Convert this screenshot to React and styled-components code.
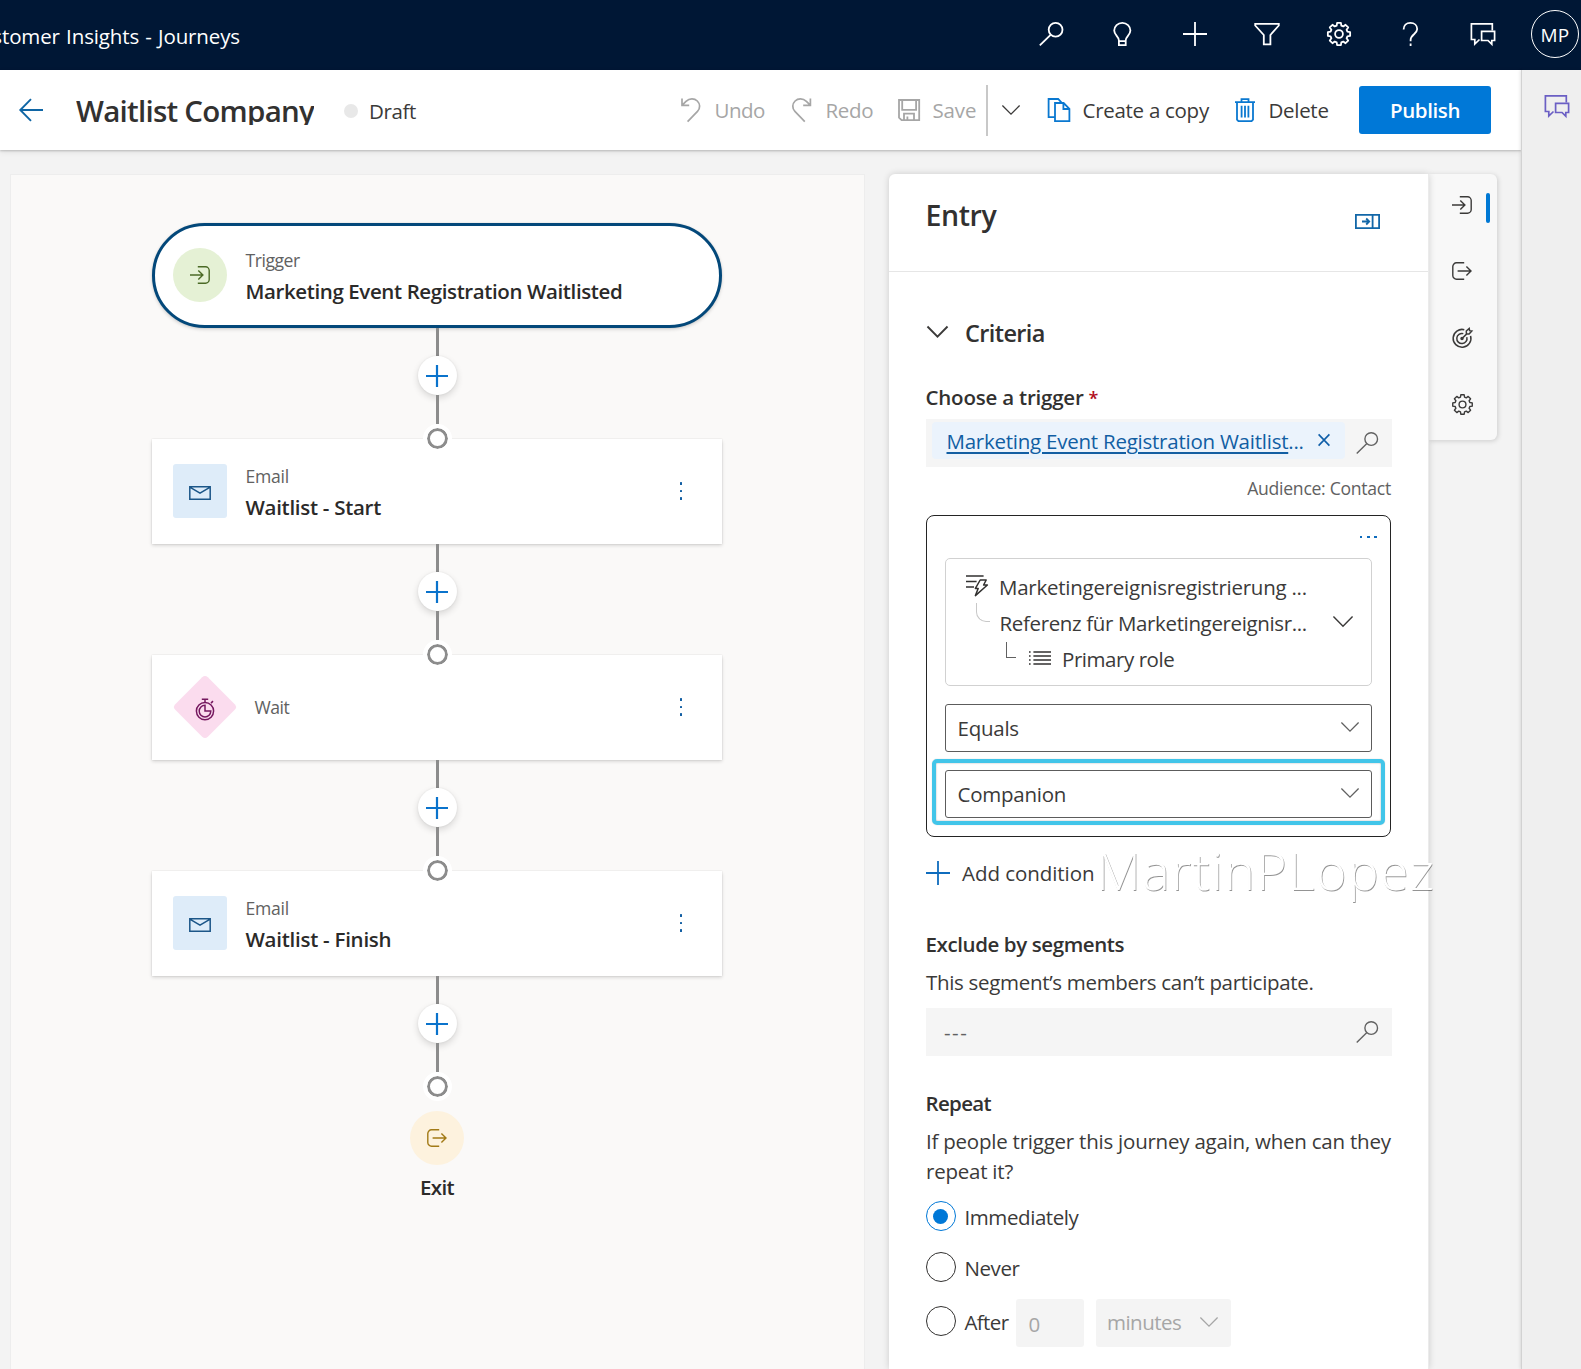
import React from 'react';
import styled, { createGlobalStyle, css } from 'styled-components';

/* ---------- base ---------- */

const GlobalStyle = createGlobalStyle`
  *, *::before, *::after { box-sizing: border-box; }
  html, body { margin: 0; height: 100%; overflow: hidden; }
  body {
    font-family: "Open Sans", "Noto Sans", sans-serif;
    font-size: 20.5px;
    line-height: 28px;
    color: #323130;
    background: #f3f3f3;
  }
  svg { display: block; flex: none; overflow: visible; }
`;

const Text = styled.span`
  display: block;
  flex: none;
  white-space: nowrap;
  letter-spacing: ${(p) => p.$track || 0}px;
  color: ${(p) => p.$color || '#3b3a39'};
  font-weight: ${(p) => (p.$strong ? 600 : 400)};
`;

const SmallText = styled(Text)`
  font-size: 17.6px;
  line-height: 24px;
  color: #616161;
`;

const Spacer = styled.div`
  flex: none;
  height: ${(p) => p.$size}px;
`;

/* ---------- icons ---------- */

const Icon = ({ w = 24, h = 24, vw, vh, stroke = 1.6, color = 'currentColor', children }) => (
  <svg width={w} height={h} viewBox={`0 0 ${vw || w} ${vh || h}`} fill="none" stroke={color} strokeWidth={stroke}>
    {children}
  </svg>
);

const gearPath = (() => {
  const pts = [];
  for (let i = 0; i < 8; i += 1) {
    const a = (i * Math.PI) / 4;
    [[-0.27, 8.7], [-0.17, 11.3], [0.17, 11.3], [0.27, 8.7]].forEach(([d, r]) => {
      pts.push(`${(12 + r * Math.sin(a + d)).toFixed(2)} ${(12 - r * Math.cos(a + d)).toFixed(2)}`);
    });
  }
  return `M${pts.join('L')}Z`;
})();

const SearchIcon = ({ size = 24, stroke = 1.8, color }) => (
  <Icon w={size} h={size} vw={24} vh={24} stroke={stroke} color={color}>
    <circle cx="16.6" cy="7.7" r="6.9" />
    <path d="M11.6 12.8 .8 23.4" />
  </Icon>
);
const BulbIcon = () => (
  <Icon stroke={1.8}>
    <path d="M7.9 18.4C7.9 14.6 3.2 13 3.2 8.6a8.1 7.8 0 0 1 16.2 0c0 4.4-4.7 6-4.7 9.8v4.8H7.9ZM7.9 19.2h6.8" />
  </Icon>
);
const PlusIcon = ({ size = 24, stroke = 1.8, color }) => (
  <Icon w={size} h={size} vw={24} vh={24} stroke={stroke} color={color}>
    <path d="M12 0v24M0 12h24" />
  </Icon>
);
const FunnelIcon = () => (
  <Icon stroke={1.8}>
    <path d="M.2 1.9h23.6v1.6L15.4 13v9.4H8.8V13L.2 3.5Z" />
  </Icon>
);
const GearIcon = ({ size = 24, stroke = 1.8 }) => (
  <Icon w={size} h={size} vw={24} vh={24} stroke={stroke}>
    <path d={gearPath} strokeLinejoin="round" />
    <circle cx="12" cy="12" r="3.9" />
  </Icon>
);
const HelpIcon = () => (
  <Icon stroke={1.8}>
    <path d="M4.6 7.6C4.6 3.4 7.4.9 11.4.9s6.8 2.4 6.8 6.2c0 5-6.6 5.3-6.6 10.9v1.2M11.6 21.6V24" />
  </Icon>
);
const ChatIcon = ({ color }) => (
  <Icon stroke={1.7} color={color}>
    <path d="M21.3 8.6V1.9H.4v15.6h3.4v4.6l4.7-4.6" />
    <path d="M10.6 9.3h13v9.2h-2.8v3.7L17 18.5h-6.4Z" />
  </Icon>
);
const BackIcon = () => (
  <Icon w={24} h={24} stroke={1.9} color="#0f66a5">
    <path d="M24 12H1.6M12 1.2 1.3 12 12 22.8" />
  </Icon>
);
const UndoIcon = () => (
  <Icon stroke={1.7}>
    <path d="M3 .4v6.9h7.2M3.2 7.1 7 3.4c3.6-3.4 8.4-3.2 11.3-.4s3.2 7.3.2 10.4L8.6 23.6" />
  </Icon>
);
const RedoIcon = () => (
  <Icon stroke={1.7}>
    <path d="M20.4.4v6.9h-7.2M20.2 7.1l-3.8-3.7C12.8 0 8 .2 5.1 3s-3.2 7.3-.2 10.4L14.8 23.6" />
  </Icon>
);
const SaveIcon = () => (
  <Icon stroke={1.8}>
    <path d="M2 2h20.2v20.2H4.6L2 19.7ZM5.2 2v9.8h13.9V2M7 22.2v-6.6h10v6.6M10.4 22v-3.4" />
  </Icon>
);
const CopyIcon = () => (
  <Icon stroke={1.8} color="#0a78d0">
    <path d="M8 19.2H1.6V1h9.6l3.6 3.8M8 5h8.6l5.8 5.8v12.3H8ZM16.4 5v6h6" />
  </Icon>
);
const TrashIcon = () => (
  <Icon stroke={1.8} color="#0a78d0">
    <path d="M2 4.2h20M8.5 4V1.2h7V4M4 4.4v17.2l1.4 1.5h13.2l1.4-1.5V4.4M8.6 7.8v11.6M12 7.8v11.6M15.4 7.8v11.6" />
  </Icon>
);
const ChevronIcon = ({ w = 18, color = '#3b3a39', stroke = 1.3 }) => (
  <Icon w={w} h={w * 0.56} vw={18} vh={10} stroke={stroke} color={color}>
    <path d="M.4.4 9 9.1 17.6.4" />
  </Icon>
);
const EnterIcon = ({ color }) => (
  <Icon w={20} h={18} stroke={1.4} color={color}>
    <path d="M7.8.8h7.7a3.7 3.7 0 0 1 3.7 3.7v9a3.7 3.7 0 0 1-3.7 3.7H7.8M0 9h12.6M8.3 4.4 12.9 9l-4.6 4.6" />
  </Icon>
);
const LeaveIcon = ({ color }) => (
  <Icon w={20} h={18} stroke={1.4} color={color}>
    <path d="M12.2.8H4.5A3.7 3.7 0 0 0 .8 4.5v9a3.7 3.7 0 0 0 3.7 3.7h7.7M5.6 9h13.2M14.4 4.4 19 9l-4.6 4.6" />
  </Icon>
);
const TargetIcon = () => (
  <Icon w={20} h={20} stroke={1.5}>
    <path d="M12.3 1.7a8.9 8.9 0 1 0 6.3 6.2M11.3 5.6a5.1 5.1 0 1 0 3.5 3.5M9.8 10.8 15 5.6M14.4 5.9l-.1-2.9L17.2.4l.4 2.3 2.2.4-2.7 2.9Z" />
    <circle cx="10" cy="10.6" r="1" fill="currentColor" />
  </Icon>
);
const MailIcon = () => (
  <Icon w={22} h={14} stroke={1.5} color="#1c5688">
    <path d="M.8.8h20.4v12.4H.8ZM.8 1.2 11 7.2l10.2-6" />
  </Icon>
);
const TimerIcon = () => (
  <Icon w={20} h={22} stroke={1.5} color="#75185f">
    <circle cx="10" cy="12.6" r="8.6" />
    <path d="M10 6.8a5.8 5.8 0 1 0 5.8 5.8H10ZM6.8.8h6.4M10 .8v3.2M16 4.6l2-2" />
  </Icon>
);
const CollapseIcon = () => (
  <Icon w={25} h={15} stroke={1.8} color="#1267a8">
    <path d="M.9.9h23.2v13.2H.9ZM17.6.9v13.2M7 7.5h7M11.2 4.5l3 3-3 3" />
  </Icon>
);
const BoltListIcon = () => (
  <Icon w={22} h={22} stroke={1.5}>
    <path d="M0 1h17.6M0 6.4h10.6M0 12h8" />
    <path d="M14.2 5h6l-2.6 5h3.8L9.4 20.6l2.8-7.2H9.4Z" strokeLinejoin="round" />
  </Icon>
);
const ListIcon = () => (
  <Icon w={22} h={14} stroke={1.3}>
    <path d="M4.4 1H22M4.4 5H22M4.4 9H22M4.4 13H22" />
    <path d="M0 1h1.6M0 5h1.6M0 9h1.6M0 13h1.6" />
  </Icon>
);
const CloseIcon = () => (
  <Icon w={12} h={12} stroke={1.6} color="#0f5ea8">
    <path d="M.6.4 11.4 11.6M11.4.4.6 11.6" />
  </Icon>
);

/* ---------- application header ---------- */

const Page = styled.div`
  display: flex;
  flex-direction: column;
  width: 100%;
  height: 100vh;
  overflow: hidden;
`;

const TopBar = styled.header`
  display: flex;
  flex: none;
  justify-content: space-between;
  height: 70px;
  padding-right: 2px;
  background: #001735;
  color: #fff;
`;

const AppNameClip = styled.div`
  display: flex;
  justify-content: flex-end;
  width: 240px;
  padding-top: 22px;
  overflow: hidden;
`;

const AppName = styled(Text)`
  color: #fff;
  word-spacing: 1px;
`;

const TopActions = styled.nav`
  display: flex;
  align-items: center;
  gap: 48px;
  padding-bottom: 2px;
`;

const Avatar = styled.div`
  display: flex;
  align-items: center;
  justify-content: center;
  width: 48px;
  height: 48px;
  margin-left: -12px;
  padding-top: 2px;
  border: 1.5px solid #fff;
  border-radius: 50%;
  font-size: 19px;
  letter-spacing: 0.3px;
`;

/* ---------- command bar ---------- */

const Main = styled.div`
  display: flex;
  flex: 1;
  min-height: 0;
`;

const Workspace = styled.main`
  display: flex;
  flex-direction: column;
  width: 1521px;
`;

const Rail = styled.aside`
  position: relative;
  display: flex;
  flex: 1;
  justify-content: center;
  padding: 24px 0 0 10px;
  background: #efefef;
  border-left: 1px solid #d2d2d2;
  box-shadow: -1px 0 3px rgba(0, 0, 0, 0.1);
`;

const CommandBar = styled.div`
  position: relative;
  display: flex;
  flex: none;
  align-items: center;
  height: 80px;
  padding: 0 30px 0 19px;
  background: #fff;
  box-shadow: 0 1px 2px rgba(0, 0, 0, 0.2), 0 2px 6px rgba(0, 0, 0, 0.08);
`;

const JourneyTitle = styled.h1`
  align-self: flex-start;
  height: 34px;
  margin: 21px 0 0 33px;
  overflow: hidden;
  font-size: 29.5px;
  font-weight: 600;
  line-height: 40px;
  letter-spacing: -0.74px;
  white-space: nowrap;
  color: #323130;
`;

const Status = styled.div`
  display: flex;
  align-items: center;
  gap: 11px;
  margin-left: 30px;
  padding-top: 1px;
`;

const StatusDot = styled.i`
  width: 14px;
  height: 14px;
  border-radius: 50%;
  background: #e8e8e8;
`;

const Commands = styled.div`
  display: flex;
  align-items: center;
  margin-left: auto;
`;

const Command = styled.div`
  display: flex;
  align-items: center;
  gap: 11.5px;
  width: ${(p) => p.$width}px;
  color: ${(p) => (p.$disabled ? '#a6a6a6' : '#323130')};
`;

const SplitToggle = styled.div`
  display: flex;
  align-items: center;
  width: 61px;
  height: 51px;
  padding-left: 14px;
  border-left: 2px solid #c8c8c8;
`;

const PublishButton = styled.button`
  width: 132px;
  height: 48px;
  padding: 0;
  border: 0;
  border-radius: 3px;
  background: #0078d7;
  color: #fff;
  font: 600 20.5px/28px "Open Sans", sans-serif;
  letter-spacing: -0.38px;
`;

/* ---------- journey canvas ---------- */

const Board = styled.div`
  display: flex;
  flex: 1;
  align-items: stretch;
  min-height: 0;
  padding: 24px 0 0 10px;
  background: #f3f3f3;
`;

const Canvas = styled.section`
  display: flex;
  flex: none;
  flex-direction: column;
  align-items: center;
  width: 855px;
  margin-right: 24px;
  padding: 48px 1px 0 0;
  border: 1px solid #ededed;
  border-bottom: 0;
  background: #faf9f8;
`;

const Step = styled.div`
  display: flex;
  flex: none;
  align-items: center;
  width: 570px;
  height: 105px;
  padding: 0 40px 0 21px;
  background: #fff;
  box-shadow: 0 1.6px 3.6px rgba(0, 0, 0, 0.16), 0 0 1.5px rgba(0, 0, 0, 0.13);
  ${(p) =>
    p.$selected &&
    css`
      padding-left: 18px;
      border: 3px solid #03487a;
      border-radius: 53px;
    `}
`;

const tileShapes = {
  circle: css`border-radius: 50%; background: ${(p) => p.$fill};`,
  square: css`border-radius: 3px; background: ${(p) => p.$fill};`,
};

const Tile = styled.div`
  display: flex;
  flex: none;
  align-items: center;
  justify-content: center;
  width: 54px;
  height: 54px;
  margin-bottom: 2px;
  ${(p) => tileShapes[p.$shape]}
`;

const EnterTile = styled(Tile)`
  padding-right: 1px;
`;

const MailTile = styled(Tile)`
  padding: 5px 0 0 0;
`;

const Diamond = styled.div`
  display: flex;
  flex: none;
  align-items: center;
  justify-content: center;
  width: 46px;
  height: 46px;
  margin: 0 8px 2px 9px;
  border-radius: 4px;
  background: #fbdcee;
  transform: rotate(45deg);

  svg { transform: rotate(-45deg) translate(0, 2.5px); }
`;

const StepText = styled.div`
  display: flex;
  flex-direction: column;
  gap: 5px;
  margin: ${(p) => (p.$single ? '0 0 2px 18.5px' : '2px 0 0 18.5px')};
`;

const Kebab = styled.div`
  display: flex;
  flex-direction: column;
  gap: 5px;
  margin: 0 0 1px auto;

  i { width: 2.5px; height: 2.5px; background: #115ea3; border-radius: 0.5px; }
`;

const Connector = styled.div`
  position: relative;
  z-index: 1;
  display: flex;
  flex: none;
  flex-direction: column;
  align-items: center;
  height: 111px;
`;

const Wire = styled.i`
  flex: none;
  width: 3px;
  height: ${(p) => p.$length}px;
  background: #8c8c8c;
`;

const AddStep = styled.div`
  display: flex;
  flex: none;
  align-items: center;
  justify-content: center;
  width: 39px;
  height: 39px;
  border-radius: 50%;
  background: #fff;
  box-shadow: 0 3px 7px rgba(0, 0, 0, 0.14), 0 0 2px rgba(0, 0, 0, 0.08);
`;

const Ring = styled.i`
  flex: none;
  width: 29px;
  height: 29px;
  border: 4px solid #fff;
  border-radius: 50%;
  background: #fff;
  box-shadow: inset 0 0 0 3px #8c8c8c;
`;

const ExitBlock = styled.div`
  display: flex;
  flex-direction: column;
  align-items: center;
  gap: 6px;
  padding-top: 24px;
`;

/* ---------- entry panel ---------- */

const Panel = styled.section`
  position: relative;
  flex: none;
  width: 540px;
  border-right: 1px solid #ebebeb;
  border-radius: 6px 0 0 0;
  background: #fff;
  box-shadow: 0 0 7px rgba(0, 0, 0, 0.16);
`;

const PanelHeader = styled.div`
  display: flex;
  justify-content: space-between;
  height: 98px;
  padding: 22px 48px 0 36.5px;
  border-bottom: 1px solid #e6e6e6;

  svg { margin-top: 18px; }
`;

const PanelTitle = styled.h2`
  margin: 0;
  font-size: 28.5px;
  font-weight: 600;
  line-height: 38px;
  letter-spacing: -0.4px;
`;

const PanelBody = styled.div`
  display: flex;
  flex-direction: column;
  padding: 45px 37px 0 37px;
`;

const SectionHeading = styled.div`
  display: flex;
  align-items: center;
  gap: 17px;
  margin-bottom: 34px;
  padding-left: 1px;

  svg { margin-bottom: 3px; }
`;

const SectionTitle = styled.h3`
  margin: 0;
  font-size: 23.5px;
  font-weight: 600;
  line-height: 32px;
  letter-spacing: -0.62px;
`;

const FieldLabel = styled(Text)`
  margin-left: -0.5px;
  font-weight: 600;
  color: #323130;

  em { margin-left: 5px; font-size: 18px; font-style: normal; font-weight: 600; line-height: 0; color: #b10e1c; }
`;

const Lookup = styled.div`
  display: flex;
  flex: none;
  align-items: center;
  justify-content: space-between;
  width: 466px;
  height: 48px;
  padding: ${(p) => (p.$empty ? '0 14px 0 18px' : '0 14px 0 6px')};
  background: #f5f5f5;
`;

const Chip = styled.div`
  display: flex;
  align-items: center;
  justify-content: space-between;
  width: 413px;
  height: 37px;
  margin-bottom: 5px;
  padding: 1px 15px 0 14.5px;
  border-radius: 4px;
  background: #ebf3fc;

  svg { margin-bottom: 2px; }
`;

const ChipLink = styled(Text)`
  color: #115ea3;

  u { text-decoration-thickness: 2px; text-underline-offset: 3px; }
`;

const Audience = styled(SmallText)`
  align-self: flex-end;
  margin: 9px 0 15px;
`;

const ConditionBox = styled.div`
  display: flex;
  flex: none;
  flex-direction: column;
  width: 465px;
  height: 322px;
  padding: 0 18px;
  border: 1.5px solid #242424;
  border-radius: 8px;
`;

const MoreDots = styled.div`
  display: flex;
  flex: none;
  align-items: center;
  justify-content: flex-end;
  gap: 4.7px;
  height: 42px;
  margin-right: -5px;

  i { width: 2.6px; height: 2.6px; background: #0f6cbd; }
`;

const AttributePath = styled.div`
  display: flex;
  flex: none;
  align-items: center;
  justify-content: space-between;
  height: 128px;
  margin-bottom: 18px;
  padding: 0 18px 0 20px;
  border: 1px solid #d1d1d1;
  border-radius: 5px;
`;

const PathLines = styled.div`
  display: flex;
  flex-direction: column;
  gap: 8px;
`;

const PathLine = styled.div`
  display: flex;
  align-items: center;
  gap: 11px;
  height: 28px;

  > span { margin-top: 2px; }
`;

const RoundElbow = styled.i`
  width: 14px;
  height: 19px;
  margin: -19px -1.5px 0 10px;
  border: solid #c8c8c8;
  border-width: 0 0 1px 1px;
  border-radius: 0 0 0 10px;
`;

const SquareElbow = styled.i`
  width: 10px;
  height: 16px;
  margin: -16px 2px 0 40px;
  border: solid #616161;
  border-width: 0 0 1px 1px;
`;

const Select = styled.div`
  display: flex;
  flex: none;
  align-items: center;
  justify-content: space-between;
  height: 48px;
  padding: 0 12px 1px 11.5px;
  border: 1px solid #5c5c5c;
  border-radius: 3px;
  background: #fff;

  svg { margin-bottom: 1px; }
`;

const Highlighted = styled.div`
  position: relative;
  margin-top: 18px;

  &::after {
    content: '';
    position: absolute;
    inset: -11px -13px -7px -13.5px;
    border: 4.5px solid #42c5e9;
    border-radius: 5px;
    box-shadow: 0 0 1px rgba(0, 0, 0, 0.3), inset 0 0 1.5px rgba(0, 0, 0, 0.45);
  }
`;

const AddCondition = styled.div`
  display: flex;
  align-items: center;
  gap: 12px;
  margin: 22px 0 43px;
`;

const Watermark = styled.div`
  position: absolute;
  z-index: 2;
  top: 664px;
  left: 207px;
  color: #fff;
  font-size: 52px;
  font-weight: 300;
  line-height: 64px;
  letter-spacing: 1.3px;
  white-space: nowrap;
  text-shadow: 0.7px 0.9px 0.5px rgba(0, 0, 0, 0.42);
`;

const Paragraph = styled.p`
  margin: 9px 0 15px;
  line-height: 30px;
  letter-spacing: -0.23px;
  white-space: nowrap;
  color: #3b3a39;
`;

const RadioRow = styled.label`
  display: flex;
  flex: none;
  align-items: flex-start;
  gap: 8.5px;
  height: ${(p) => p.$height || 30}px;
  margin-bottom: ${(p) => p.$after || 0}px;
  padding-top: ${(p) => p.$top || 0}px;

  > span { margin-top: 2px; }
`;

const Radio = styled.i`
  display: flex;
  flex: none;
  align-items: center;
  justify-content: center;
  width: 30px;
  height: 30px;
  padding-right: 1px;
  border: 1.5px solid ${(p) => (p.$checked ? '#0078d7' : '#323130')};
  border-radius: 50%;

  &::after {
    content: '';
    width: 15px;
    height: 15px;
    border-radius: 50%;
    background: ${(p) => (p.$checked ? '#0078d7' : 'transparent')};
  }
`;

const AfterRow = styled.div`
  display: flex;
  align-items: flex-start;
`;

const AmountBox = styled.div`
  width: 68px;
  height: 48px;
  margin: 0 12px 0 7.5px;
  padding: 11px 0 0 12.5px;
  border-radius: 3px;
  background: #f4f4f4;
`;

const UnitBox = styled.div`
  display: flex;
  align-items: flex-start;
  justify-content: space-between;
  width: 135px;
  height: 48px;
  padding: 9px 13px 0 11px;
  border-radius: 3px;
  background: #f4f4f4;

  svg { margin-top: 9px; }
`;

const TabStrip = styled.nav`
  display: flex;
  flex: none;
  flex-direction: column;
  gap: 46.5px;
  width: 68px;
  height: 266px;
  padding-top: 20.5px;
  border-radius: 0 6px 6px 0;
  background: #f8f8f8;
  box-shadow: 1px 1px 5px rgba(0, 0, 0, 0.16);
  color: #3b3a39;
`;

const Tab = styled.div`
  position: relative;
  display: flex;
  align-items: center;
  justify-content: center;
  height: 20px;
  padding-right: 2px;

  ${(p) =>
    p.$active &&
    css`
      &::after {
        content: '';
        position: absolute;
        top: -1.5px;
        right: 7px;
        width: 4px;
        height: 30px;
        border-radius: 2px;
        background: #0078d4;
      }
    `}
`;

/* ---------- composition ---------- */

const StepLink = () => (
  <Connector>
    <Wire $length={28} />
    <AddStep>
      <PlusIcon size={22} stroke={2.4} color="#0a73cc" />
    </AddStep>
    <Wire $length={29} />
    <Ring />
  </Connector>
);

const StepMenu = () => (
  <Kebab>
    <i />
    <i />
    <i />
  </Kebab>
);

const EmailStep = ({ name, track }) => (
  <Step>
    <MailTile $shape="square" $fill="#deecf9">
      <MailIcon />
    </MailTile>
    <StepText>
      <SmallText $track={-0.27} $color="#616161">Email</SmallText>
      <Text $strong $track={track} $color="#2b2a29">{name}</Text>
    </StepText>
    <StepMenu />
  </Step>
);

const TopHeader = () => (
  <TopBar>
    <AppNameClip>
      <AppName $track={-0.12} $color="#fff">Customer Insights - Journeys</AppName>
    </AppNameClip>
    <TopActions>
      <SearchIcon />
      <BulbIcon />
      <PlusIcon />
      <FunnelIcon />
      <GearIcon />
      <HelpIcon />
      <ChatIcon />
      <Avatar>MP</Avatar>
    </TopActions>
  </TopBar>
);

const JourneyCommands = () => (
  <CommandBar>
    <BackIcon />
    <JourneyTitle>Waitlist Company</JourneyTitle>
    <Status>
      <StatusDot />
      <Text $track={-0.39}>Draft</Text>
    </Status>
    <Commands>
      <Command $width={111} $disabled>
        <UndoIcon />
        <Text $track={-0.55} $color="#a6a6a6">Undo</Text>
      </Command>
      <Command $width={107} $disabled>
        <RedoIcon />
        <Text $track={-0.28} $color="#a6a6a6">Redo</Text>
      </Command>
      <Command $width={89} $disabled>
        <SaveIcon />
        <Text $track={-0.16} $color="#a6a6a6">Save</Text>
      </Command>
      <SplitToggle>
        <ChevronIcon />
      </SplitToggle>
      <Command $width={186}>
        <CopyIcon />
        <Text $track={-0.28}>Create a copy</Text>
      </Command>
      <Command $width={126}>
        <TrashIcon />
        <Text $track={-0.3}>Delete</Text>
      </Command>
      <PublishButton>Publish</PublishButton>
    </Commands>
  </CommandBar>
);

const JourneyCanvas = () => (
  <Canvas>
    <Step $selected>
      <EnterTile $shape="circle" $fill="#e5f1d5">
        <EnterIcon color="#4b6a26" />
      </EnterTile>
      <StepText>
        <SmallText $track={-0.47} $color="#616161">Trigger</SmallText>
        <Text $strong $track={-0.39} $color="#2b2a29">Marketing Event Registration Waitlisted</Text>
      </StepText>
    </Step>
    <StepLink />
    <EmailStep name="Waitlist - Start" track={-0.29} />
    <StepLink />
    <Step>
      <Diamond>
        <TimerIcon />
      </Diamond>
      <StepText $single>
        <SmallText $track={-0.49} $color="#616161">Wait</SmallText>
      </StepText>
      <StepMenu />
    </Step>
    <StepLink />
    <EmailStep name="Waitlist - Finish" track={-0.26} />
    <StepLink />
    <ExitBlock>
      <Tile $shape="circle" $fill="#fdf2de">
        <LeaveIcon color="#a27a16" />
      </Tile>
      <Text $strong $track={-0.7} $color="#2b2a29">Exit</Text>
    </ExitBlock>
  </Canvas>
);

const EntryPanel = () => (
  <Panel>
    <PanelHeader>
      <PanelTitle>Entry</PanelTitle>
      <CollapseIcon />
    </PanelHeader>
    <PanelBody>
      <SectionHeading>
        <ChevronIcon w={21} stroke={1.6} />
        <SectionTitle>Criteria</SectionTitle>
      </SectionHeading>
      <FieldLabel $track={-0.21}>Choose a trigger<em>*</em></FieldLabel>
      <Spacer $size={8} />
      <Lookup>
        <Chip>
          <ChipLink $track={-0.24} $color="#115ea3">
            <u>Marketing Event Registration Waitlist</u>...
          </ChipLink>
          <CloseIcon />
        </Chip>
        <SearchIcon size={22} stroke={1.5} color="#616161" />
      </Lookup>
      <Audience $track={-0.28} $color="#616161">Audience: Contact</Audience>
      <ConditionBox>
        <MoreDots>
          <i />
          <i />
          <i />
        </MoreDots>
        <AttributePath>
          <PathLines>
            <PathLine>
              <BoltListIcon />
              <Text $track={-0.25}>Marketingereignisregistrierung ...</Text>
            </PathLine>
            <PathLine>
              <RoundElbow />
              <Text $track={-0.36}>Referenz für Marketingereignisr...</Text>
            </PathLine>
            <PathLine>
              <SquareElbow />
              <ListIcon />
              <Text $track={-0.45}>Primary role</Text>
            </PathLine>
          </PathLines>
          <ChevronIcon w={20} />
        </AttributePath>
        <Select>
          <Text $track={-0.25}>Equals</Text>
          <ChevronIcon color="#616161" />
        </Select>
        <Highlighted>
          <Select>
            <Text $track={-0.25}>Companion</Text>
            <ChevronIcon color="#616161" />
          </Select>
        </Highlighted>
      </ConditionBox>
      <AddCondition>
        <PlusIcon color="#0f6cbd" />
        <Text $track={-0.05}>Add condition</Text>
      </AddCondition>
      <FieldLabel $track={-0.4}>Exclude by segments</FieldLabel>
      <Spacer $size={10} />
      <Text $track={-0.31}>This segment’s members can’t participate.</Text>
      <Spacer $size={12} />
      <Lookup $empty>
        <Text $track={1.5} $color="#616161">---</Text>
        <SearchIcon size={22} stroke={1.5} color="#616161" />
      </Lookup>
      <Spacer $size={33} />
      <FieldLabel $track={-0.68}>Repeat</FieldLabel>
      <Paragraph>
        If people trigger this journey again, when can they
        <br />
        repeat it?
      </Paragraph>
      <RadioRow $after={21}>
        <Radio $checked />
        <Text $track={-0.42}>Immediately</Text>
      </RadioRow>
      <RadioRow $after={17}>
        <Radio />
        <Text $track={-0.42}>Never</Text>
      </RadioRow>
      <AfterRow>
        <RadioRow $height={48} $top={7}>
          <Radio />
          <Text $track={-0.62}>After</Text>
        </RadioRow>
        <AmountBox>
          <Text $color="#a6a6a6">0</Text>
        </AmountBox>
        <UnitBox>
          <Text $track={-0.52} $color="#a6a6a6">minutes</Text>
          <ChevronIcon color="#a6a6a6" />
        </UnitBox>
      </AfterRow>
    </PanelBody>
    <Watermark>MartinPLopez</Watermark>
  </Panel>
);

export default function App() {
  return (
    <Page>
      <GlobalStyle />
      <TopHeader />
      <Main>
        <Workspace>
          <JourneyCommands />
          <Board>
            <JourneyCanvas />
            <EntryPanel />
            <TabStrip>
              <Tab $active>
                <EnterIcon />
              </Tab>
              <Tab>
                <LeaveIcon />
              </Tab>
              <Tab>
                <TargetIcon />
              </Tab>
              <Tab>
                <GearIcon size={21} stroke={1.6} />
              </Tab>
            </TabStrip>
          </Board>
        </Workspace>
        <Rail>
          <ChatIcon color="#6b5fc4" />
        </Rail>
      </Main>
    </Page>
  );
}
